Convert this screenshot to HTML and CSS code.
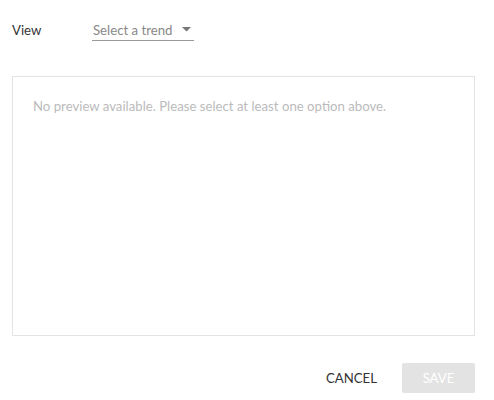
FILE: index.html
```html
<!DOCTYPE html>
<html>
<head>
<meta charset="utf-8">
<link rel="stylesheet" href="styles.css">
</head>
<body>
<div class="dialog">
  <div class="field-row">
    <span class="label">View</span>
    <div class="select">
      <span class="select-text">Select a trend</span>
      <svg class="caret" width="9" height="5" viewBox="0 0 9 5"><path d="M0 0 L9 0 L4.5 4.5 Z" fill="#777"/></svg>
    </div>
  </div>
  <div class="preview">
    <p class="empty">No preview available. Please select at least one option above.</p>
  </div>
  <div class="actions">
    <button class="btn btn-text">CANCEL</button>
    <button class="btn btn-save" disabled>SAVE</button>
  </div>
</div>
</body>
</html>
```

FILE: styles.css
```css
html, body {
  margin: 0;
  padding: 0;
  background: #fff;
}
body {
  font-family: Lato, "Open Sans", sans-serif;
  font-size: 13.2px;
  color: #333;
}
.dialog {
  padding: 21px 19px 0 12px;
}
.field-row {
  display: flex;
  align-items: flex-start;
  height: 55px;
}
.label {
  width: 80px;
  line-height: 18px;
  color: #333;
}
.select {
  display: flex;
  align-items: center;
  width: 102px;
  height: 20px;
  border-bottom: 1px solid #999;
  box-sizing: border-box;
  padding-left: 1px;
}
.select-text {
  color: #888;
  line-height: 18px;
  margin-top: -2px;
  flex: 1;
}
.caret {
  margin-right: 3px;
  margin-top: -3px;
}
.preview {
  height: 260px;
  border: 1px solid #e3e3e3;
  box-sizing: border-box;
  padding: 20px 20px;
}
.empty {
  margin: 0;
  color: #bbb;
  line-height: 18px;
}
.actions {
  display: flex;
  justify-content: flex-end;
  align-items: center;
  gap: 9px;
  margin-top: 27px;
}
.btn {
  font-family: Lato, "Open Sans", sans-serif;
  font-size: 13.2px;
  border: none;
  height: 30px;
  padding: 0 16px;
  background: transparent;
}
.btn-text {
  color: #333;
}
.btn-save {
  width: 73px;
  background: #e3e3e3;
  color: #fff;
  border-radius: 2px;
}
```
